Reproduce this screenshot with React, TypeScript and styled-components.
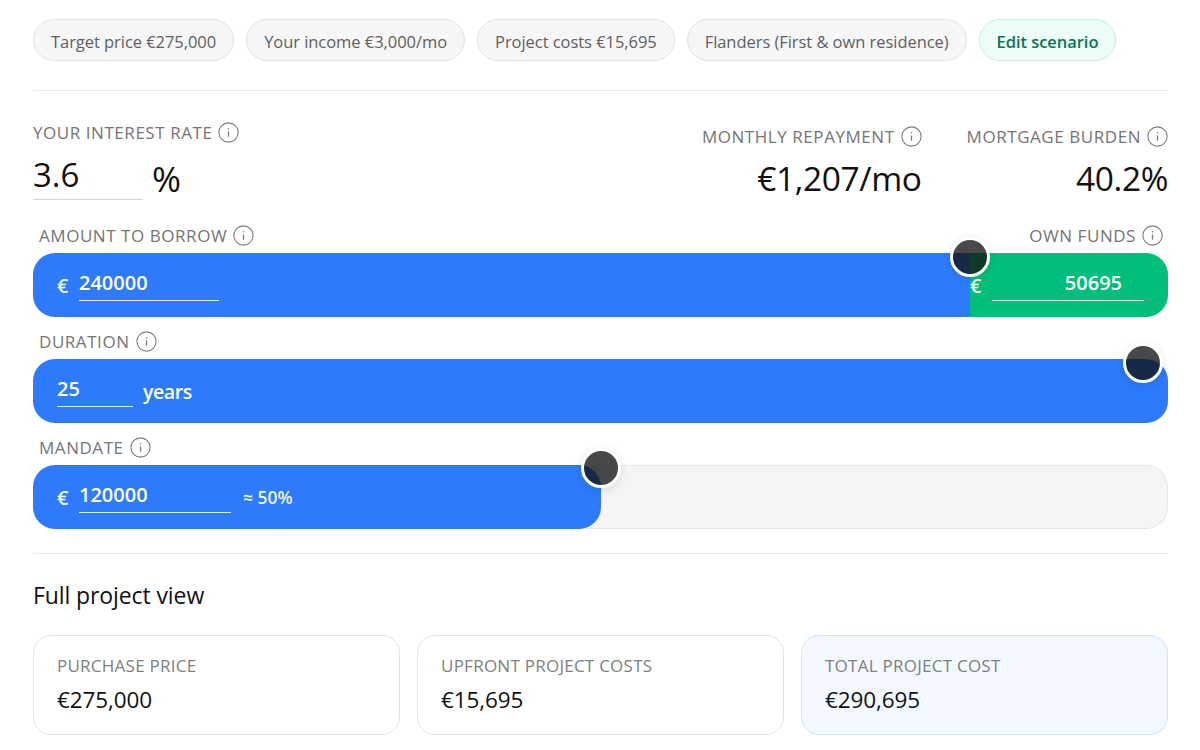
import { createGlobalStyle, styled } from "styled-components";

const GlobalStyle = createGlobalStyle`
  html, body {
    margin: 0;
    padding: 0;
    background: #ffffff;
    font-family: "Open Sans", "Noto Sans", sans-serif;
  }
`

const Page = styled.main`
  width: 1135px;
  margin-left: 33px;
  padding-top: 19px;
  display: flex;
  flex-direction: column;
`

const PillRow = styled.div`
  display: flex;
  gap: 12px;
  padding-bottom: 29px;
  border-bottom: 1px solid #ececec;
`

const Pill = styled.button<{ $accent?: boolean }>`
  height: 42px;
  padding: 3px 17px 0;
  border-radius: 21px;
  border: 1px solid ${props => props.$accent ? "#c4f2dd" : "#e3e3e3"};
  background: ${props => props.$accent ? "#ecfdf5" : "#f6f6f6"};
  color: ${props => props.$accent ? "#0b7355" : "#5f5f5f"};
  font-family: inherit;
  font-size: 16.5px;
  font-weight: ${props => props.$accent ? 600 : 400};
  letter-spacing: -0.05px;
  white-space: nowrap;
`

const StatsRow = styled.section`
  display: flex;
  justify-content: space-between;
  padding-top: 29px;
`

const RateBlock = styled.div`
  display: flex;
  flex-direction: column;
  gap: 14px;
`

const RateValue = styled.div`
  display: flex;
  align-items: flex-end;
  gap: 9px;
  color: #111111;
`

const RateInput = styled.span`
  width: 110px;
  height: 41px;
  line-height: 33px;
  font-size: 33px;
  font-weight: 500;
  border-bottom: 1px solid #d4d4d4;
`

const Unit = styled.span`
  margin-bottom: 2px;
  font-size: 35px;
  line-height: 38px;
`

const Results = styled.div`
  display: flex;
  gap: 45px;
  padding-top: 4px;
`

const Result = styled.div`
  display: flex;
  flex-direction: column;
  align-items: flex-end;
  gap: 11px;
`

const ResultValue = styled.div`
  font-size: 33.5px;
  line-height: 38px;
  font-weight: 500;
  letter-spacing: -0.4px;
  color: #111111;
`

const Label = styled.div`
  display: flex;
  align-items: center;
  gap: 6px;
  height: 24px;
  font-size: 17px;
  font-weight: 500;
  letter-spacing: 0.55px;
  color: #757575;
  white-space: nowrap;
`

const InfoGlyph = styled.svg`
  width: 21px;
  height: 21px;
  flex: none;
  color: #7c7c7c;
`

const Sliders = styled.section`
  display: flex;
  flex-direction: column;
  gap: 12px;
  margin-top: 23px;
  padding-bottom: 24px;
  border-bottom: 1px solid #ececec;
`

const SliderRow = styled.div`
  display: flex;
  flex-direction: column;
  gap: 6px;
`

const LabelRow = styled.div`
  display: flex;
  justify-content: space-between;
  padding: 0 5px 0 6px;
`

const Track = styled.div`
  position: relative;
  display: flex;
  height: 64px;
  border-radius: 22px;
  background: #f5f5f5;
  box-shadow: inset 0 0 0 1px #e8e8e8;
`

const Fill = styled.div<{ $tone: "blue" | "green"; $shape: "left" | "right" | "all" }>`
  box-sizing: border-box;
  display: flex;
  align-items: center;
  color: #ffffff;
  background: ${props => props.$tone === "blue" ? "#2d7bfb" : "#01bf7b"};
  border-radius: ${props =>
    props.$shape === "left" ? "22px 0 0 22px" : props.$shape === "right" ? "0 22px 22px 0" : "22px"};
  padding-left: ${props => props.$tone === "blue" ? "24px" : "0"};
`

const Euro = styled.span`
  width: 22px;
  flex: none;
  font-size: 20px;
  font-weight: 600;
  opacity: 0.92;
`

const AmountInput = styled.span<{ $width: number; $end?: boolean }>`
  box-sizing: border-box;
  width: ${props => props.$width}px;
  height: 31px;
  line-height: 26px;
  font-size: 20px;
  font-weight: 600;
  border-bottom: 1px solid rgba(255, 255, 255, 0.85);
  text-align: ${props => props.$end ? "right" : "left"};
  padding-right: ${props => props.$end ? "22px" : "0"};
`

const Suffix = styled.span`
  margin-left: 10px;
  font-size: 19.5px;
  font-weight: 600;
  letter-spacing: -0.4px;
`

const Share = styled.span`
  margin-left: 12px;
  font-size: 17.5px;
  font-weight: 600;
  opacity: 0.92;
`

const Thumb = styled.span`
  position: absolute;
  box-sizing: border-box;
  width: 40px;
  height: 40px;
  margin-left: -20px;
  border-radius: 50%;
  border: 3px solid #ffffff;
  background: rgba(16, 16, 16, 0.76);
  box-shadow: 0 2px 8px rgba(0, 0, 0, 0.12);
`

const SectionTitle = styled.h2`
  margin: 26px 0 25px;
  font-size: 23px;
  line-height: 30px;
  font-weight: 500;
  letter-spacing: -0.1px;
  color: #111111;
`

const Cards = styled.section`
  display: grid;
  grid-template-columns: repeat(3, 1fr);
  gap: 17px;
`

const Card = styled.div<{ $highlight?: boolean }>`
  box-sizing: border-box;
  height: 100px;
  padding: 19px 23px;
  border-radius: 18px;
  border: 1px solid ${props => props.$highlight ? "#cfe3f8" : "#e3e3e3"};
  background: ${props => props.$highlight ? "#f2f8fe" : "#ffffff"};
`

const CardLabel = styled.div`
  font-size: 17px;
  line-height: 22px;
  letter-spacing: 0.25px;
  color: #808080;
`

const CardValue = styled.div`
  margin-top: 8px;
  font-size: 22.5px;
  line-height: 30px;
  font-weight: 500;
  letter-spacing: -0.1px;
  color: #111111;
`

function Info() {
  return (
    <InfoGlyph viewBox="0 0 21 21" fill="none" stroke="currentColor" aria-hidden="true">
      <circle cx="10.5" cy="10.5" r="9.6" strokeWidth="1.1" />
      <path d="M10.5 9.5v5.2" strokeWidth="1.3" />
      <circle cx="10.5" cy="6.8" r="0.8" fill="currentColor" stroke="none" />
    </InfoGlyph>
  )
}

const pills = [
  "Target price €275,000",
  "Your income €3,000/mo",
  "Project costs €15,695",
  "Flanders (First & own residence)",
]

const cards = [
  { label: "PURCHASE PRICE", value: "€275,000" },
  { label: "UPFRONT PROJECT COSTS", value: "€15,695" },
  { label: "TOTAL PROJECT COST", value: "€290,695", highlight: true },
]

function App() {
  return (
    <Page>
      <GlobalStyle />
      <PillRow>
        {pills.map((pill) => (
          <Pill key={pill}>{pill}</Pill>
        ))}
        <Pill $accent>Edit scenario</Pill>
      </PillRow>

      <StatsRow>
        <RateBlock>
          <Label>YOUR INTEREST RATE <Info /></Label>
          <RateValue>
            <RateInput>3.6</RateInput>
            <Unit>%</Unit>
          </RateValue>
        </RateBlock>
        <Results>
          <Result>
            <Label>MONTHLY REPAYMENT <Info /></Label>
            <ResultValue>€1,207/mo</ResultValue>
          </Result>
          <Result>
            <Label>MORTGAGE BURDEN <Info /></Label>
            <ResultValue>40.2%</ResultValue>
          </Result>
        </Results>
      </StatsRow>

      <Sliders>
        <SliderRow>
          <LabelRow>
            <Label>AMOUNT TO BORROW <Info /></Label>
            <Label>OWN FUNDS <Info /></Label>
          </LabelRow>
          <Track>
            <Fill $tone="blue" $shape="left" style={{ width: "82.56%" }}>
              <Euro>€</Euro>
              <AmountInput $width={140}>240000</AmountInput>
            </Fill>
            <Fill $tone="green" $shape="right" style={{ width: "17.44%" }}>
              <Euro>€</Euro>
              <AmountInput $width={152} $end>50695</AmountInput>
            </Fill>
            <Thumb style={{ left: "82.56%", top: -16 }} />
          </Track>
        </SliderRow>

        <SliderRow>
          <LabelRow>
            <Label>DURATION <Info /></Label>
          </LabelRow>
          <Track>
            <Fill $tone="blue" $shape="all" style={{ width: "100%" }}>
              <AmountInput $width={76}>25</AmountInput>
              <Suffix>years</Suffix>
            </Fill>
            <Thumb style={{ left: "97.8%", top: -16 }} />
          </Track>
        </SliderRow>

        <SliderRow>
          <LabelRow>
            <Label>MANDATE <Info /></Label>
          </LabelRow>
          <Track>
            <Fill $tone="blue" $shape="all" style={{ width: "50%" }}>
              <Euro>€</Euro>
              <AmountInput $width={152}>120000</AmountInput>
              <Share>≈ 50%</Share>
            </Fill>
            <Thumb style={{ left: "50%", top: -17 }} />
          </Track>
        </SliderRow>
      </Sliders>

      <SectionTitle>Full project view</SectionTitle>
      <Cards>
        {cards.map((card) => (
          <Card key={card.label} $highlight={card.highlight}>
            <CardLabel>{card.label}</CardLabel>
            <CardValue>{card.value}</CardValue>
          </Card>
        ))}
      </Cards>
    </Page>
  )
}

export default App
